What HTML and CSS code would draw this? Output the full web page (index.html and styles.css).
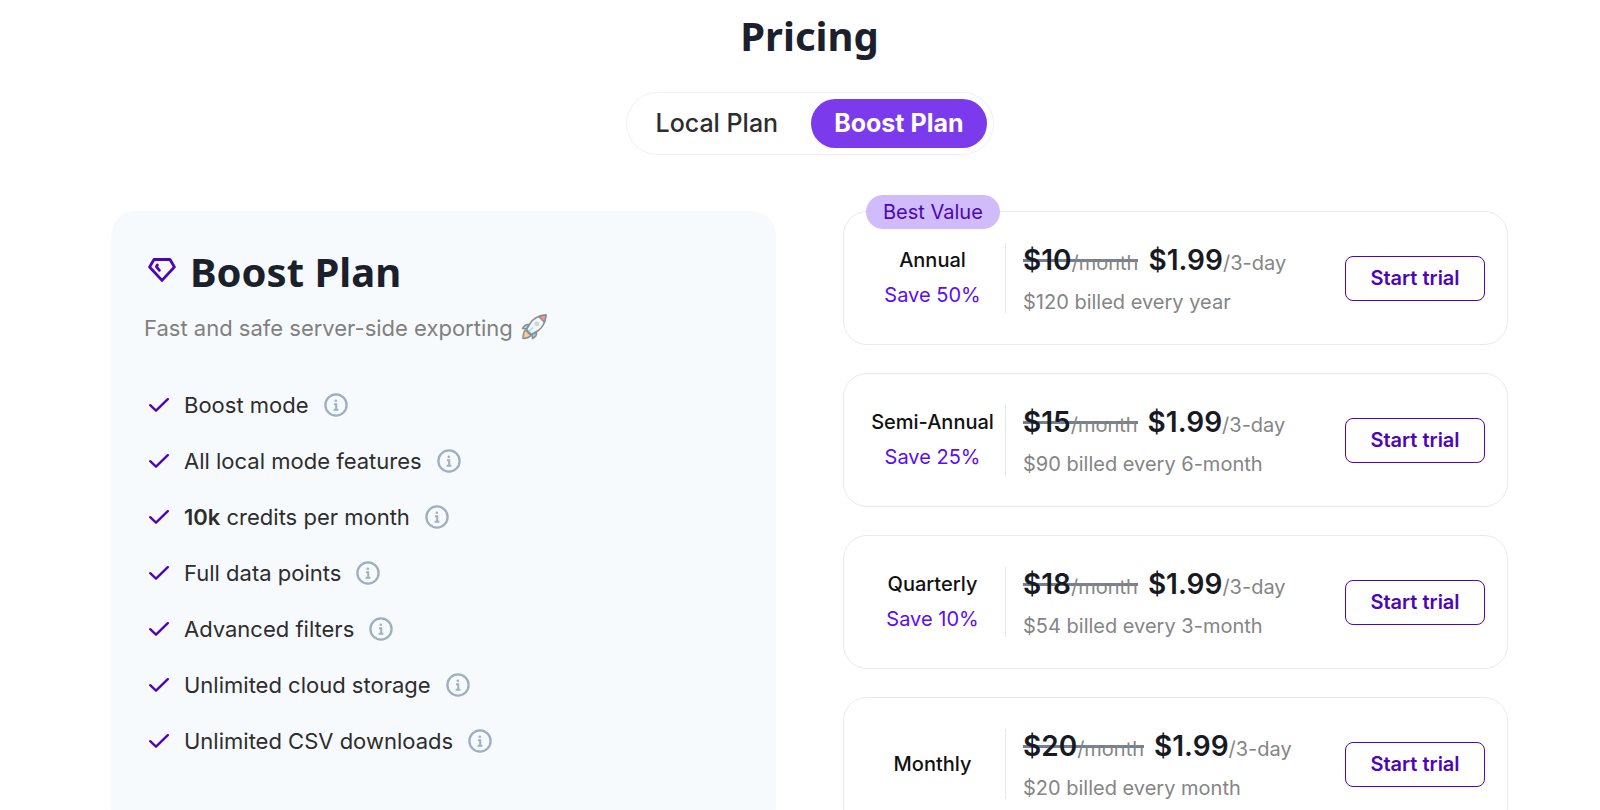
FILE: index.html
```html
<!DOCTYPE html>
<html lang="en">
<head>
<meta charset="utf-8">
<title>Pricing</title>
<link rel="stylesheet" href="styles.css">
</head>
<body>
<svg class="sprite" aria-hidden="true">
  <symbol id="check" viewBox="0 0 20 14"><path d="M1.2 7.2 7 12.6 18.8 1.2" fill="none" stroke="currentColor" stroke-width="2.4" stroke-linecap="round" stroke-linejoin="round"/></symbol>
  <symbol id="info" viewBox="0 0 24 24"><circle cx="12" cy="12" r="10.6" fill="none" stroke="currentColor" stroke-width="2.3"/><circle cx="11.8" cy="7.8" r="1.3" fill="currentColor"/><path d="M10 11.2h2.200v5.400M9.600 16.800h4.800" fill="none" stroke="currentColor" stroke-width="2"/></symbol>
</svg>
<main class="page">
  <h1 class="title">Pricing</h1>
  <div class="toggle">
    <button class="tab" type="button">Local Plan</button>
    <button class="tab tab-active" type="button">Boost Plan</button>
  </div>
  <div class="columns">
    <section class="plan">
      <h2 class="plan-name">
        <svg class="gem" viewBox="0 0 28 24" aria-hidden="true"><path d="M6 1.5h16L26.400 9 14 22.400 1.600 9zM9.300 7l-.9 1.600 3 3.700" fill="none" stroke="currentColor" stroke-width="2.800" stroke-linecap="round" stroke-linejoin="round"/></svg>
        Boost Plan
      </h2>
      <p class="tagline">Fast and safe server-side exporting
        <svg class="rocket" viewBox="0 0 26 26" role="img" aria-label="rocket"><g stroke="#222" stroke-width="1.5" stroke-linejoin="round"><path d="M2 24.500c0-4 .5-6.500 2.500-8.500l5.500 5.500c-2 2-4 3-8 3z" fill="#ff9b3a"/><path d="M8 10.500c-3-.5-5 1-6.500 4l5 .5zM15.500 18c.5 3-1 5-4 6.500l-.5-5z" fill="#2cc4ee"/><path d="M25 1c-7 .5-12.500 3-16 8.500L5.500 15.500l5 5 6-3.500C22 13.500 24.500 8 25 1z" fill="#f1f3f5"/><path d="M25 1c-2.800.2-5 .7-7.200 1.500L23.500 8.200C24.300 6 24.800 3.800 25 1z" fill="#e8334a"/></g><circle cx="15.800" cy="9.800" r="2.400" fill="#a9adb3"/><path d="M8 17.500l4-4" stroke="#2cc4ee" stroke-width="1.500"/></svg>
      </p>
      <ul class="features">
        <li><svg class="check"><use href="#check"/></svg><span>Boost mode</span><svg class="info"><use href="#info"/></svg></li>
        <li><svg class="check"><use href="#check"/></svg><span>All local mode features</span><svg class="info"><use href="#info"/></svg></li>
        <li><svg class="check"><use href="#check"/></svg><span><b>10k</b> credits per month</span><svg class="info"><use href="#info"/></svg></li>
        <li><svg class="check"><use href="#check"/></svg><span>Full data points</span><svg class="info"><use href="#info"/></svg></li>
        <li><svg class="check"><use href="#check"/></svg><span>Advanced filters</span><svg class="info"><use href="#info"/></svg></li>
        <li><svg class="check"><use href="#check"/></svg><span>Unlimited cloud storage</span><svg class="info"><use href="#info"/></svg></li>
        <li><svg class="check"><use href="#check"/></svg><span>Unlimited CSV downloads</span><svg class="info"><use href="#info"/></svg></li>
      </ul>
    </section>
    <div class="offers">
      <article class="offer">
        <span class="badge">Best Value</span>
        <div class="term"><h3>Annual</h3><p class="save">Save 50%</p></div>
        <div class="cost">
          <p class="price"><s><b>$10</b><small>/month</small></s><span><b>$1.99</b><small>/3-day</small></span></p>
          <p class="billed">$120 billed every year</p>
        </div>
        <button class="trial" type="button">Start trial</button>
      </article>
      <article class="offer">
        <div class="term"><h3>Semi-Annual</h3><p class="save">Save 25%</p></div>
        <div class="cost">
          <p class="price"><s><b>$15</b><small>/month</small></s><span><b>$1.99</b><small>/3-day</small></span></p>
          <p class="billed">$90 billed every 6-month</p>
        </div>
        <button class="trial" type="button">Start trial</button>
      </article>
      <article class="offer">
        <div class="term"><h3>Quarterly</h3><p class="save">Save 10%</p></div>
        <div class="cost">
          <p class="price"><s><b>$18</b><small>/month</small></s><span><b>$1.99</b><small>/3-day</small></span></p>
          <p class="billed">$54 billed every 3-month</p>
        </div>
        <button class="trial" type="button">Start trial</button>
      </article>
      <article class="offer">
        <div class="term"><h3>Monthly</h3></div>
        <div class="cost">
          <p class="price"><s><b>$20</b><small>/month</small></s><span><b>$1.99</b><small>/3-day</small></span></p>
          <p class="billed">$20 billed every month</p>
        </div>
        <button class="trial" type="button">Start trial</button>
      </article>
    </div>
  </div>
</main>
</body>
</html>
```
FILE: styles.css
```css
* { box-sizing: border-box; }
body, h1, h2, h3, p, ul { margin: 0; padding: 0; }
body {
  background: #fff;
  color: #2d2d2d;
  font-family: Inter, "Liberation Sans", sans-serif;
  font-size: 22px;
}
button { font-family: inherit; cursor: pointer; }
.sprite { display: none; }
.page {
  display: flex;
  flex-direction: column;
  align-items: center;
  padding: 8px 92px 28px 111px;
}
.title, .plan-name {
  color: #1a202c;
  font-family: "Noto Sans", "Open Sans", sans-serif;
  font-size: 40px;
  font-weight: 700;
  line-height: 56px;
}
.toggle {
  display: flex;
  margin-top: 28px;
  padding: 6px;
  border: 1px solid #edf2f7;
  border-radius: 32px;
}
.tab {
  height: 49px;
  padding: 0 23px 2px;
  border: 0;
  border-radius: 25px;
  background: none;
  color: #2d2d2d;
  font-size: 25px;
  font-weight: 500;
}
.tab + .tab { margin-left: 10px; }
.tab-active { background: #7c3aed; color: #fff; font-weight: 700; }
.columns {
  display: grid;
  grid-template-columns: 1fr 1fr;
  gap: 67px;
  width: 100%;
  margin-top: 56px;
}
.plan {
  padding: 33px;
  border-radius: 24px;
  background: #f7fafd;
}
.plan-name { display: flex; gap: 14px; }
.gem { width: 28px; height: 24px; margin: 14px 0 0 4px; color: #4c06b8; }
.tagline {
  margin-top: 11px;
  color: #808080;
  font-size: 22px;
  line-height: 34px;
}
.rocket { width: 26px; height: 26px; margin-left: 2px; vertical-align: -4px; opacity: .5; }
.features { margin-top: 32px; list-style: none; }
.features li { display: flex; align-items: center; height: 56px; padding-left: 5px; }
.features span { margin: 0 15px; }
.features b { font-weight: 600; }
.check { width: 20px; height: 14px; color: #4c06b8; }
.info { width: 24px; height: 24px; color: #a0aec0; }
.offers { display: flex; flex-direction: column; gap: 28px; }
.offer {
  position: relative;
  display: flex;
  align-items: center;
  min-height: 134px;
  padding: 0 22px 0 16px;
  border: 1px solid #e6ebf3;
  border-radius: 24px;
}
.badge {
  position: absolute;
  top: -17px;
  left: 22px;
  padding: 0 17px;
  border-radius: 17px;
  background: #d0bcfa;
  color: #4c06b8;
  font-size: 20px;
  line-height: 34px;
}
.term {
  display: flex;
  flex-direction: column;
  justify-content: center;
  width: 146px;
  height: 70px;
  border-right: 1px solid #e2e8f0;
  font-size: 20px;
  line-height: 35px;
  text-align: center;
}
.term h3 { color: #111; font-size: inherit; font-weight: 500; }
.save { color: #5b0cf5; }
.cost { flex: 1; padding: 3px 0 0 17px; color: #858585; font-size: 20px; }
.price { display: flex; gap: 10px; line-height: 42px; }
.price b { color: #171923; font-size: 28px; font-weight: 600; }
.price small { font-size: 20px; }
.price s {
  background: linear-gradient(#718096, #718096) 0 20px / 100% 3px no-repeat;
  text-decoration: none;
}
.billed { line-height: 36px; }
.trial {
  width: 140px;
  height: 45px;
  border: 1px solid #4c06b8;
  border-radius: 8px;
  background: #fff;
  color: #4c06b8;
  font-size: 20px;
  font-weight: 600;
}
```
